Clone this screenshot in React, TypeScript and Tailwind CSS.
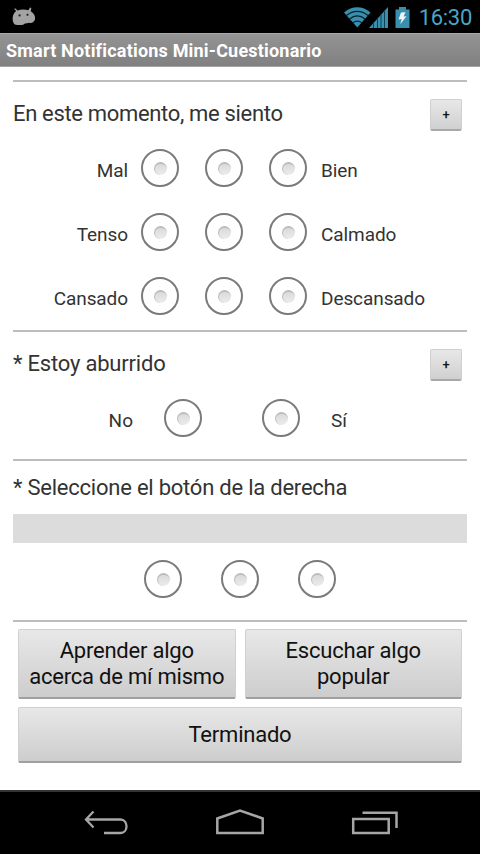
import type { ReactNode } from 'react';

const SCALES = [
  { low: 'Mal', high: 'Bien' },
  { low: 'Tenso', high: 'Calmado' },
  { low: 'Cansado', high: 'Descansado' },
];

function Radio() {
  return (
    <button
      type="button"
      className="flex h-[38px] w-[38px] shrink-0 items-center justify-center rounded-full border-2 border-[#7b7b7b] bg-white"
    >
      <span className="h-[13px] w-[13px] rounded-full border-t-2 border-l border-[#bcbcbc] bg-linear-to-b from-[#dadada] to-[#ececec]" />
    </button>
  );
}

function Divider() {
  return <div className="h-[2px] w-full shrink-0 bg-[#bdbdbd]" />;
}

function MoreButton() {
  return (
    <button
      type="button"
      className="mr-[5px] h-8 w-8 rounded-[2px] border border-b-2 border-[#cfcfcf] border-b-[#a8a8a8] bg-linear-to-b from-[#e8e8e8] to-[#d0d0d0] text-[13px] leading-none font-medium text-[#111]"
    >
      +
    </button>
  );
}

function ActionButton({ className, children }: { className: string; children: ReactNode }) {
  return (
    <button
      type="button"
      className={`${className} rounded-[2px] border border-b-2 border-[#d0d0d0] border-b-[#a0a0a0] bg-linear-to-b from-[#e8e8e8] to-[#cdcdcd] pt-px text-[22px] leading-[26px] tracking-[-0.22px] text-[#111]`}
    >
      {children}
    </button>
  );
}

function StatusBar() {
  return (
    <header className="flex h-[33px] items-center bg-black pr-2 pl-3">
      <svg width="24" height="20" viewBox="0 0 24 20" fill="#a3a3a3">
        <path d="M4.2 4 2.200 2l.9-.7 2.500 2.200c3-1.200 7.300-1.300 10.800-.3L18 .5l1.300.4-.5 3.300c3.300 2 4.800 5 4.200 8.100-.7 3-3.300 4.200-6.300 3.500-1.700.7-3 .5-4.300.9-1.500 1.700-3.600 1.500-5.400 1.200C3.500 18.500 1.700 17.500 1 14.500.2 10.700.8 6.500 4.200 4z" />
        <circle cx="7.600" cy="8.400" r="1.100" fill="#222" />
        <circle cx="15.500" cy="7.800" r="1.100" fill="#222" />
      </svg>
      <div className="ml-auto flex items-center">
        <svg width="66" height="24" viewBox="0 0 66 24" fill="none">
          <path d="M0 7.500C8 .5 18.500.5 26.500 7.500L13.300 22.500z" fill="#398fae" />
          <path d="M2.500 10.500C9 5 17.500 5 24 10.500M5.500 14c5-4 10.600-4 15.600 0M9 17.700c2.800-2 5.900-2 8.700 0" stroke="#06222d" strokeWidth="1.300" />
          <path d="M25 23 44 2v21z" fill="#398fae" />
          <path d="M29.500 17v6M33.500 13v10M37 9v14M40.500 5v18" stroke="#124050" strokeWidth="1" />
          <path d="M55 2h7v2.500h3.500V23h-14V4.500H55z" fill="#398fae" />
          <path d="m57 7.500 4.500-.3-2 4.300 3-.3-6.300 8 1.500-5.200-3.200.5z" fill="#eef8fb" />
        </svg>
        <span className="mt-[2px] ml-[9px] text-[22px] leading-none tracking-[-0.3px] text-[#4aa5c6]">16:30</span>
      </div>
    </header>
  );
}

function NavBar() {
  return (
    <nav className="flex h-16 items-center justify-center gap-[86px] border-t-2 border-[#343434] bg-black pl-px">
      <svg width="46" height="28" viewBox="0 0 46 28" fill="none" stroke="#a6a6a6" strokeWidth="2.300">
        <path d="M10.500 2.500 3 10.500l7.500 8M3 10.500h34.500c8 0 8 13.500 0 13.500H21" />
      </svg>
      <svg width="50" height="28" viewBox="0 0 50 28" fill="none" stroke="#a6a6a6" strokeWidth="2.500">
        <path d="M2.300 24V9.500L25 1.500l22.700 8V24z" />
      </svg>
      <svg width="48" height="28" viewBox="0 0 48 28" fill="none" stroke="#a6a6a6" strokeWidth="2.500">
        <path d="M2.200 10h35.500v14H2.200zM11.500 3.800h34V19" />
      </svg>
    </nav>
  );
}

export default function App() {
  return (
    <div className="flex h-[854px] w-[480px] flex-col overflow-hidden bg-white font-[Roboto,sans-serif] text-[#333]">
      <StatusBar />
      <h1 className="flex h-[34px] items-center border-t border-b border-t-[#aaa] border-b-[#a4a4a4] bg-linear-to-b from-[#949494] to-[#808080] pl-[6px] text-[18px] font-bold tracking-[0.2px] text-white">
        Smart Notifications Mini-Cuestionario
      </h1>

      <main className="flex flex-1 flex-col px-[13px] pt-[13px]">
        <Divider />
        <section className="pt-[17px] pb-[2px]">
          <div className="flex h-8 items-center justify-between text-[22px] tracking-[-0.33px]">
            <h2 className="pb-1">En este momento, me siento</h2>
            <MoreButton />
          </div>
          <div className="mt-[5px]">
            {SCALES.map((scale) => (
              <div key={scale.low} className="flex h-16 items-center text-[19px] tracking-[-0.08px]">
                <span className="w-[115px] pt-[6px] text-right">{scale.low}</span>
                <div className="ml-[13px] flex gap-[26px]">
                  <Radio />
                  <Radio />
                  <Radio />
                </div>
                <span className="ml-[14px] pt-[6px]">{scale.high}</span>
              </div>
            ))}
          </div>
        </section>

        <Divider />
        <section className="h-[127px] pt-[17px]">
          <div className="flex h-8 items-center justify-between text-[22px] tracking-[-0.2px]">
            <h2 className="pb-1">* Estoy aburrido</h2>
            <MoreButton />
          </div>
          <div className="mt-[5px] flex h-16 items-center text-[19px]">
            <span className="w-[120px] pt-[6px] text-right">No</span>
            <div className="ml-[31px] flex gap-[60px]">
              <Radio />
              <Radio />
            </div>
            <span className="ml-[31px] pt-[6px]">Sí</span>
          </div>
        </section>

        <Divider />
        <section className="flex h-[159px] flex-col">
          <h2 className="mt-[10px] flex h-8 items-center text-[22px] tracking-[-0.23px]">* Seleccione el botón de la derecha</h2>
          <div className="mt-[11px] h-[29px] bg-[#dcdcdc]" />
          <div className="mt-[17px] flex justify-center gap-[39px]">
            <Radio />
            <Radio />
            <Radio />
          </div>
        </section>

        <Divider />
        <div className="grid grid-cols-2 gap-x-[9px] gap-y-[8px] px-[5px] pt-[7px]">
          <ActionButton className="h-[70px]">
            Aprender algo
            <br />
            acerca de mí mismo
          </ActionButton>
          <ActionButton className="h-[70px]">
            Escuchar algo
            <br />
            popular
          </ActionButton>
          <ActionButton className="col-span-2 h-[56px]">Terminado</ActionButton>
        </div>
      </main>

      <NavBar />
    </div>
  );
}
